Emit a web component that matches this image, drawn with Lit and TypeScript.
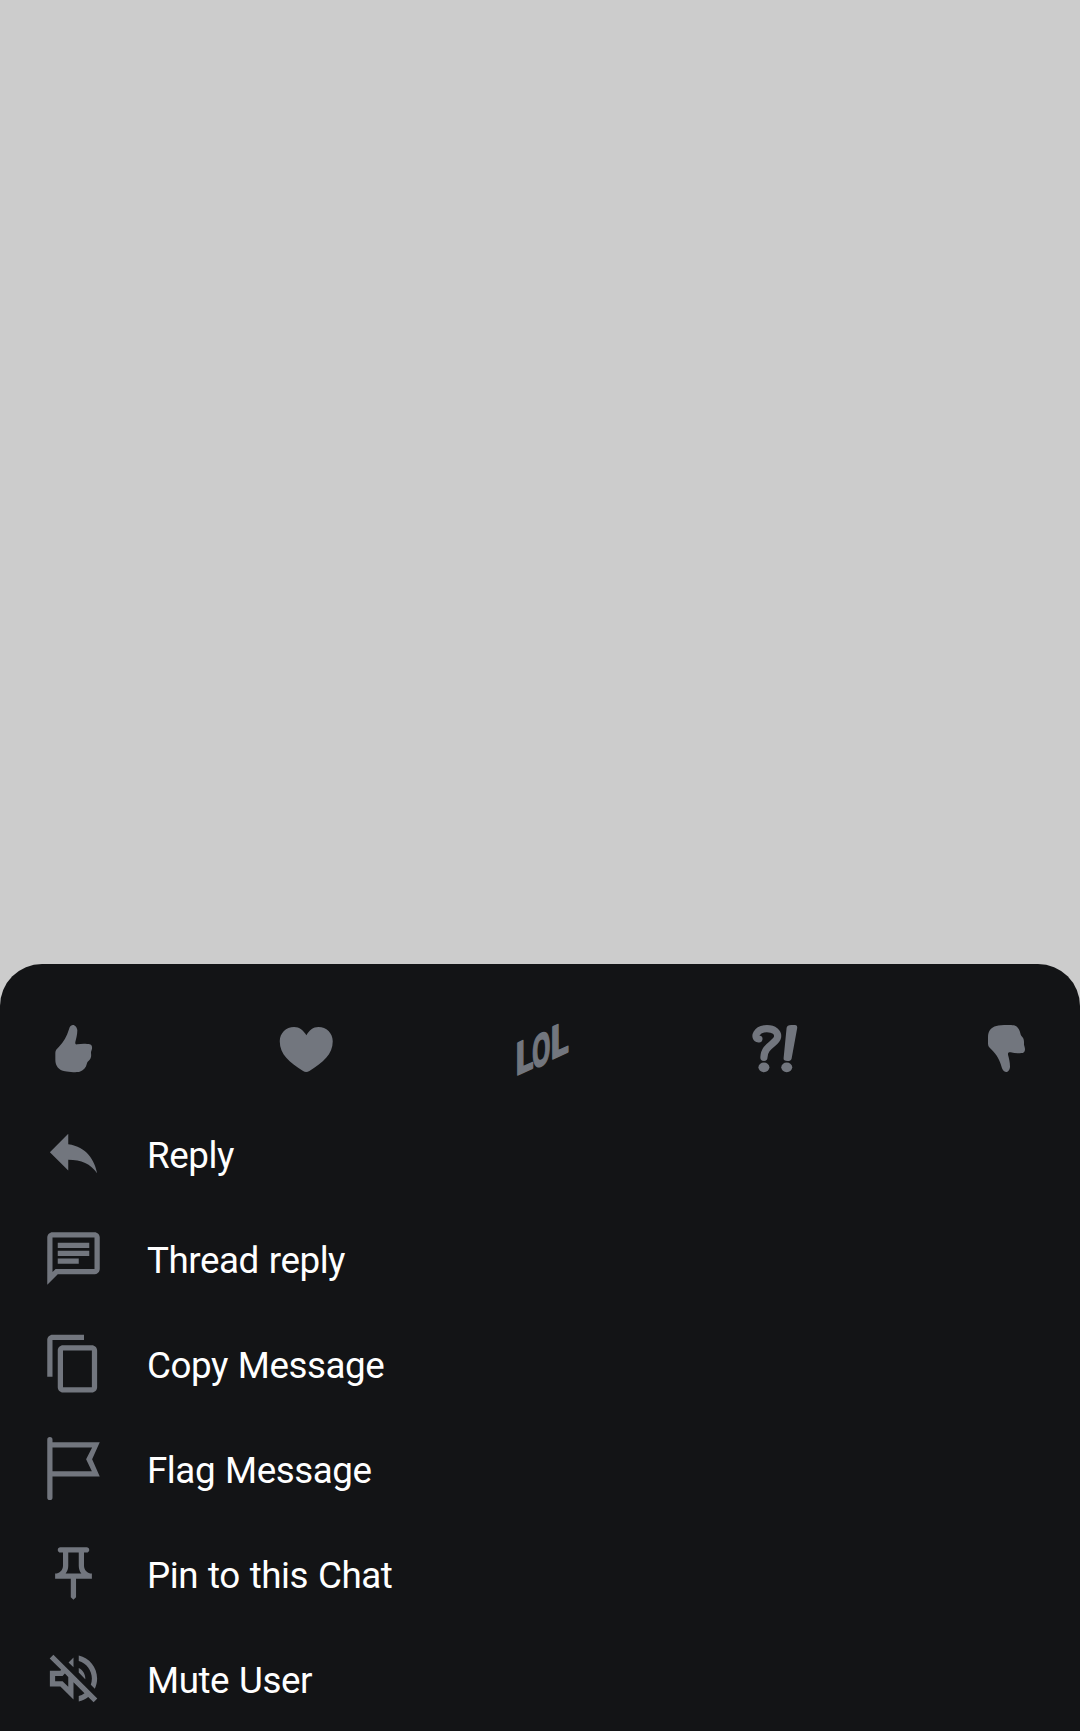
import { LitElement, html, svg, css } from "lit";
import { customElement } from "lit/decorators.js";

// Reaction glyphs: each is drawn in a 189-unit box (three units per pixel).
const reactions = [
  {
    label: "Like",
    box: "36 36 189 189",
    art: svg`<path d="M128 60C134 59 141 66 142 76C142 89 138 103 136 111C135 117 137 119 142 118C154 116 170 116 179 118C185 119 187 124 186 131C185 137 182 140 183 144C184 152 184 158 179 164C175 168 172 170 171 175C168 189 160 197 149 200C139 202 116 202 105 199C86 195 76 183 76 164L76 143C76 135 81 131 87 125C101 112 110 95 117 73C119 65 122 61 128 60Z"/>`,
  },
  {
    label: "Love",
    box: "45.75 36 189 189",
    art: svg`<path d="M140 91C131 76 119 66 103 66C79 66 60 84 60 109C60 148 89 173 130 198Q139 204 149 198C190 173 219 148 219 109C219 84 200 66 176 66C160 66 148 76 140 91Z"/>`,
  },
  {
    label: "LOL",
    box: "25.5 36 189 189",
    art: svg`<g class="lol">
      <text transform="matrix(1 -.46 0 1 43 214)" textLength="57" lengthAdjust="spacingAndGlyphs">L</text>
      <text transform="matrix(1 -.46 0 1 94 195)" textLength="57" lengthAdjust="spacingAndGlyphs">O</text>
      <text transform="matrix(1 -.46 0 1 148 166)" textLength="58" lengthAdjust="spacingAndGlyphs">L</text>
    </g>`,
  },
  {
    label: "Wut",
    box: "20.25 36 189 189",
    art: svg`<path class="line" d="M71 102C53 99 63 71 95 71C116 71 129 81 127 96C123 117 87 121 86 157"/>
      <path d="M154 69Q155 60 168 60H180Q187 61 186 68L169 161Q167 168 157 168Q144 168 145 160Z"/>
      <ellipse cx="86" cy="187" rx="16.500" ry="14.500"/><ellipse cx="154.500" cy="187" rx="16.500" ry="14.500"/>`,
  },
  {
    label: "Dislike",
    box: "30 36 189 189",
    art: svg`<path d="M123 201C117 201 112 195 110 187C105 166 96 150 80 134C72 127 69 124 69 115L69 97C69 78 78 67 94 63C106 59 136 59 147 61C158 64 164 73 166 85C167 90 168 92 172 96C178 103 177 111 177 119C178 123 180 128 180 134C179 141 176 144 169 144C159 146 147 144 137 142C131 141 128 143 129 149C132 159 135 172 135 185C135 194 129 201 123 201Z"/>`,
  },
];

const actions = [
  { label: "Reply", art: svg`<path d="M10 8.500V4.500l-7 7 7 7v-4.100c5 0 8.500 1.600 11 5.100-1-5-4-10-11-11z"/>` },
  {
    label: "Thread reply",
    art: svg`<path d="M4 4h16v12H5.170L4 17.170V4m0-2c-1.100 0-1.990.9-1.990 2L2 22l4-4h14c1.100 0 2-.9 2-2V4c0-1.100-.9-2-2-2H4zM6 6h12v2H6zM6 9h12v2H6zM6 12h8v2H6z"/>`,
  },
  {
    label: "Copy Message",
    art: svg`<path d="M16 1H4c-1.100 0-2 .9-2 2v14h2V3h12V1zm3 4H8c-1.100 0-2 .9-2 2v14c0 1.100.9 2 2 2h11c1.100 0 2-.9 2-2V7c0-1.100-.9-2-2-2zm0 16H8V7h11v14z"/>`,
  },
  {
    label: "Flag Message",
    art: svg`<path d="M2 1a1 1 0 0 1 2 0v1h18l-2.900 6.500L22 15H4v8a1 1 0 0 1-2 0zM4 4v9h15l-2.200-4.500L19.100 4z" fill-rule="evenodd"/>`,
  },
  {
    label: "Pin to this Chat",
    art: svg`<path d="M14 4v5c0 1.120.37 2.160 1 3H9c.65-.86 1-1.900 1-3V4h4m3-2H7c-.55 0-1 .45-1 1s.45 1 1 1h1v5c0 1.660-1.340 3-3 3v2h5.970v7l1 1 1-1v-7H19v-2c-1.660 0-3-1.340-3-3V4h1c.55 0 1-.45 1-1s-.45-1-1-1z"/>`,
  },
  {
    label: "Mute User",
    art: svg`<path d="M4.340 2.930L2.930 4.340 7.290 8.700 7 9H3v6h4l5 5v-6.590l4.180 4.180c-.65.49-1.380.88-2.180 1.110v2.060c1.340-.3 2.570-.92 3.610-1.750l2.050 2.050 1.410-1.410L4.340 2.930zM10 15.170L7.830 13H5v-2h2.830l.88-.88L10 11.410v3.760zM19 12c0 .82-.15 1.610-.41 2.340l1.530 1.530c.56-1.170.88-2.480.88-3.870 0-4.280-2.990-7.860-7-8.770v2.060c2.890.86 5 3.540 5 6.710zm-7-8l-1.880 1.880L12 7.760zm4.500 8c0-1.770-1.020-3.290-2.500-4.030v1.790l2.480 2.480c.01-.08.02-.16.02-.24z"/>`,
  },
];

@customElement("app-root")
export class AppRoot extends LitElement {
  static styles = css`
    :host {
      display: flex;
      flex-direction: column;
      height: 1731px;
      overflow: hidden;
      background: #cccccc;
      font-family: Roboto, sans-serif;
    }
    .scrim {
      flex: 1;
    }
    .sheet {
      box-sizing: border-box;
      height: 767px;
      padding-top: 53px;
      border-radius: 42px 42px 0 0;
      background: #131416;
    }
    .reactions {
      display: flex;
      justify-content: space-between;
      padding: 0 42px 21px;
    }
    button {
      display: flex;
      align-items: center;
      margin: 0;
      padding: 0;
      border: 0;
      background: none;
      font: inherit;
      color: #ffffff;
    }
    .action {
      width: 100%;
      height: 105px;
      padding: 0 42px;
      gap: 42px;
      font-size: 36.75px;
      line-height: 43px;
      letter-spacing: -0.45px;
      word-spacing: 1.3px;
      text-align: left;
    }
    .label {
      padding-top: 4px;
    }
    svg {
      display: block;
      flex: none;
      width: 63px;
      height: 63px;
      overflow: visible;
      fill: #72767e;
    }
    .line {
      fill: none;
      stroke: #72767e;
      stroke-width: 21.5;
      stroke-linecap: round;
      stroke-linejoin: round;
    }
    .lol {
      font: 700 134px "Open Sans", sans-serif;
      stroke: #72767e;
      stroke-width: 5;
      stroke-linejoin: round;
    }
  `;

  render() {
    return html`
      <div class="scrim"></div>
      <section class="sheet">
        <div class="reactions">
          ${reactions.map(
            (r) => html`<button aria-label=${r.label}><svg viewBox=${r.box}>${r.art}</svg></button>`,
          )}
        </div>
        ${actions.map(
          (a) => html`<button class="action"><svg viewBox="0 0 24 24">${a.art}</svg><span class="label">${a.label}</span></button>`,
        )}
      </section>
    `;
  }
}
